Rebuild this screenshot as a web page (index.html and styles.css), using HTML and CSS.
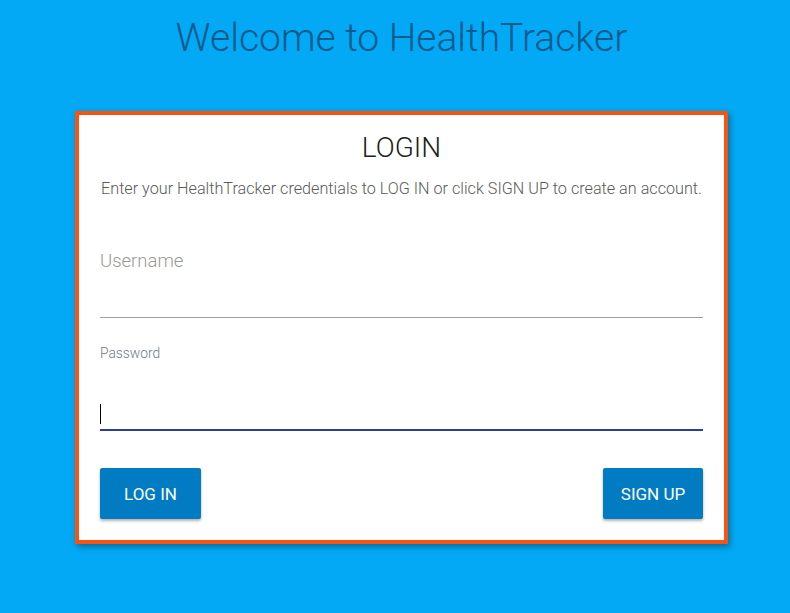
FILE: index.html
```html
<!DOCTYPE html>
<html>
<head>
<meta charset="utf-8">
<link rel="stylesheet" href="styles.css">
</head>
<body>
<h1 class="title">Welcome to HealthTracker</h1>
<div class="card">
  <h2 class="card-title">LOGIN</h2>
  <p class="desc">Enter your HealthTracker credentials to LOG IN or click SIGN UP to create an account.</p>
  <div class="field field-user">
    <label class="label-big">Username</label>
    <div class="input input-user"></div>
  </div>
  <div class="field field-pass">
    <label class="label-small">Password</label>
    <div class="input input-pass"><span class="caret"></span></div>
  </div>
  <div class="actions">
    <button class="btn btn-login">LOG IN</button>
    <button class="btn btn-signup">SIGN UP</button>
  </div>
</div>
</body>
</html>
```
FILE: styles.css
```css
html, body {
  margin: 0;
  padding: 0;
}
body {
  background: #03a9f4;
  font-family: Roboto, "Liberation Sans", sans-serif;
  font-weight: 300;
  width: 790px;
  height: 613px;
  overflow: hidden;
}
.title {
  margin: 15px 0 0;
  padding-left: 13px;
  font-size: 39px;
  line-height: 47px;
  font-weight: 300;
  color: #0a5a8c;
  text-align: center;
}
.card {
  margin: 49px 0 0 75px;
  border: 4px solid #fa5210;
  background: #fff;
  box-shadow: 2px 3px 6px rgba(0,0,0,0.35);
  padding: 16px 21px 0;
  box-sizing: content-box;
  display: flex;
  flex-direction: column;
  width: 603px;
  height: 409px;
}
.card-title {
  margin: 0;
  font-size: 28px;
  line-height: 33px;
  font-weight: 300;
  color: #212121;
  text-align: center;
}
.desc {
  margin: 15px -20px 0;
  font-size: 16.2px;
  line-height: 19px;
  color: #5a5a5a;
  text-align: center;
}
.field {
  display: flex;
  flex-direction: column;
}
.field-user {
  margin-top: 53px;
}
.label-big {
  font-size: 18.5px;
  line-height: 21px;
  color: #9a9a94;
}
.input-user {
  height: 45px;
  border-bottom: 1px solid #9e9e9e;
}
.field-pass {
  margin-top: 27px;
}
.label-small {
  font-size: 13.8px;
  line-height: 16px;
  color: #707a8c;
}
.input-pass {
  border-bottom: 2px solid #2d3e9a;
  display: flex;
  align-items: flex-end;
  padding-bottom: 5px;
  box-sizing: border-box;
  height: 70px;
}
.caret {
  width: 1px;
  height: 20px;
  background: #000;
}
.actions {
  margin-top: 37px;
  display: flex;
  justify-content: space-between;
}
.btn {
  height: 51px;
  padding: 0;
  border: none;
  border-radius: 2px;
  background: #017bc1;
  color: #fff;
  font-family: Roboto, "Liberation Sans", sans-serif;
  font-weight: 400;
  font-size: 17px;
  text-align: center;
  box-shadow: 0 2px 3px rgba(0,0,0,0.3);
}
.btn-login {
  width: 101px;
}
.btn-signup {
  width: 100px;
}
```
